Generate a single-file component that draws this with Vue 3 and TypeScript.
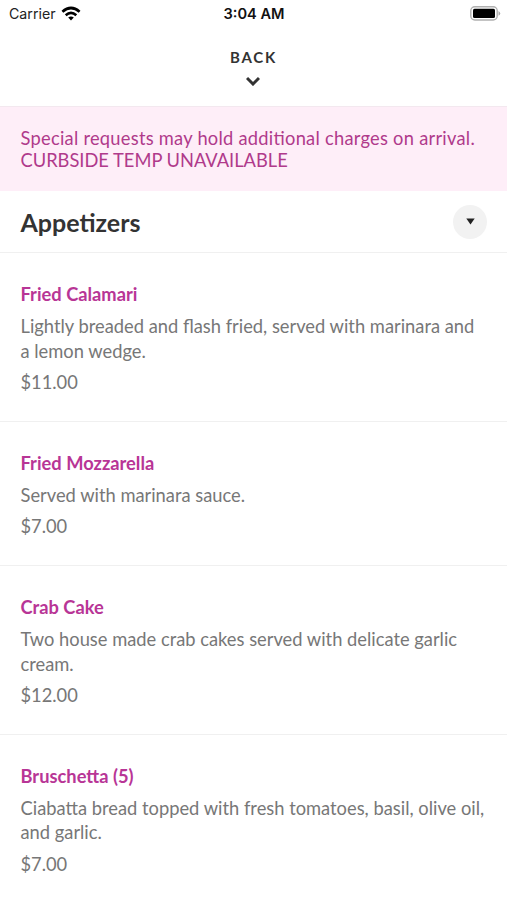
<script setup lang="ts">
interface MenuItem {
  name: string
  lines: string[]
  price: string
}

const items: MenuItem[] = [
  { name: 'Fried Calamari', lines: ['Lightly breaded and flash fried, served with marinara and', 'a lemon wedge.'], price: '$11.00' },
  { name: 'Fried Mozzarella', lines: ['Served with marinara sauce.'], price: '$7.00' },
  { name: 'Crab Cake', lines: ['Two house made crab cakes served with delicate garlic', 'cream.'], price: '$12.00' },
  { name: 'Bruschetta (5)', lines: ['Ciabatta bread topped with fresh tomatoes, basil, olive oil,', 'and garlic.'], price: '$7.00' },
]
</script>

<template>
  <main class="screen">
    <div class="status">
      <div class="carrier">
        <span>Carrier</span>
        <svg width="20" height="15" viewBox="0 0 20 15" fill="none" stroke="#000" stroke-width="2.7">
          <path d="M1.4 5.7Q10-1.7 18.6 5.7" /><path d="M4.7 9.2Q10 4.7 15.3 9.2" /><path d="M7.2 11.6Q10 9.2 12.8 11.6L10 14.5Z" fill="#000" stroke="none" />
        </svg>
      </div>
      <span class="time">3:04 AM</span>
      <svg class="battery" width="31" height="15" viewBox="0 0 31 15">
        <rect x=".8" y=".8" width="26.4" height="13.2" rx="4" fill="none" stroke="#b0b0b0" stroke-width="1.4" />
        <rect x="3" y="2.8" width="22" height="9.2" rx="1.5" />
        <path d="M28.5 5Q32 7.4 28.5 9.8Z" fill="#aaa" />
      </svg>
    </div>
    <header class="back">
      <span>BACK</span>
      <svg width="14" height="10" viewBox="0 0 14 10" fill="none" stroke="#333" stroke-width="3"><path d="M1 2L7 8L13 2" /></svg>
    </header>
    <section class="notice">
      <div class="n1">Special requests may hold additional charges on arrival.</div>
      <div class="n2">CURBSIDE TEMP UNAVAILABLE</div>
    </section>
    <div class="category">
      <h1>Appetizers</h1>
      <button class="toggle" aria-label="Choose category">
        <svg width="9" height="7" viewBox="0 0 9 7"><path d="M.3 .5H8.7L4.5 6.5Z" fill="#222" /></svg>
      </button>
    </div>
    <article v-for="item in items" :key="item.name" class="item">
      <h2>{{ item.name }}</h2>
      <p><span v-for="line in item.lines" :key="line">{{ line }}</span></p>
      <div class="price">{{ item.price }}</div>
    </article>
  </main>
</template>

<style>
body { margin: 0; background: #fff; overflow: hidden; }
</style>
<style scoped>
.screen { width: 507px; height: 900px; overflow: hidden; background: #fff; font-family: Lato, sans-serif; color: #333; }
.status { height: 27px; display: grid; grid-template-columns: 1fr auto 1fr; align-items: center; padding: 0 6px 0 9px; box-sizing: border-box; font-family: Inter, sans-serif; font-size: 14.2px; color: #222; }
.carrier { display: flex; align-items: center; gap: 5px; }
.time { font-size: 14.6px; font-weight: 600; color: #111; position: relative; left: -1px; }
.battery { justify-self: end; }
.back { height: 79px; box-sizing: border-box; padding: 20px 1px 0 0; display: flex; flex-direction: column; align-items: center; font-size: 15px; line-height: 20px; font-weight: 700; letter-spacing: 1.8px; }
.back span { padding-left: 1px; }
.back svg { margin-top: 9px; }
.notice { height: 84.5px; box-sizing: border-box; padding: 20px 20.5px 0; border-top: 1px solid #f3e8ef; background: #feeef8; color: #b03a8b; font-size: 18.3px; line-height: 22px; white-space: nowrap; }
.n1 { letter-spacing: .26px; font-feature-settings: "liga" 1; }
.category { height: 62.5px; box-sizing: border-box; padding: 1px 20px 0 20.5px; display: flex; align-items: center; justify-content: space-between; border-bottom: 1px solid #f0f0f0; }
h1 { margin: 0; font-size: 25px; line-height: 30px; font-weight: 700; }
.toggle { border: 0; padding: 0; width: 34px; height: 34px; border-radius: 50%; background: #f2f2f2; display: flex; align-items: center; justify-content: center; }
.item { padding: 29.2px 20.5px 26.1px; border-bottom: 1px solid #f0f0f0; white-space: nowrap; }
h2 { margin: 0 0 8px; font-size: 18.3px; line-height: 24px; font-weight: 700; color: #b83596; }
p { margin: 0 0 7px; font-size: 18.32px; line-height: 24.4px; color: #777; }
p span { display: block; }
.price { font-size: 18.3px; line-height: 24.6px; color: #777; }
</style>
